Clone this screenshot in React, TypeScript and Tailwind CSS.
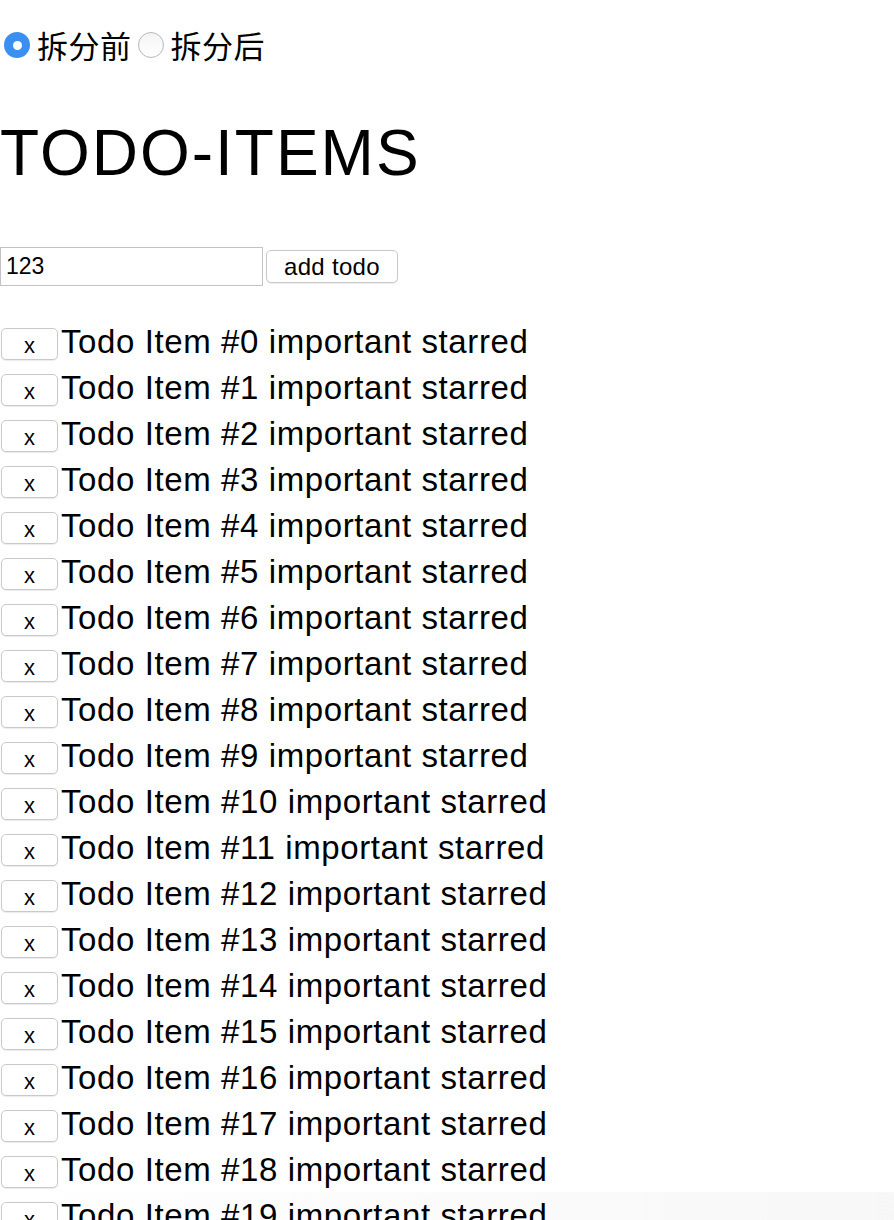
import React from "react";

const font = { fontFamily: '"Liberation Sans", Arial, "Noto Sans CJK SC", sans-serif' };

export default function App() {
  const items = Array.from({ length: 22 }, (_, i) => i);
  return (
    <div className="relative bg-white text-black h-[1220px] overflow-hidden" style={font}>
      <div className="pt-[31px] h-[59px] flex items-center">
        <span className="ml-[4px] w-[26px] h-[26px] rounded-full bg-[#3b8fef] flex items-center justify-center">
          <span className="w-[9px] h-[9px] rounded-full bg-white" />
        </span>
        <span className="ml-[7px] text-[31px] leading-[34px] tracking-[0.5px] font-['Noto_Sans_CJK_SC',sans-serif]">拆分前</span>
        <span className="ml-[6px] w-[26px] h-[26px] rounded-full border border-[#b8b8b8] bg-gradient-to-b from-[#f4f4f4] to-white" />
        <span className="ml-[7px] text-[31px] leading-[34px] tracking-[0.5px] font-['Noto_Sans_CJK_SC',sans-serif]">拆分后</span>
      </div>
      <h1 className="mt-[62px] h-[64px] text-[64px] leading-[64px] tracking-[2px]">TODO-ITEMS</h1>
      <div className="mt-[62px] flex items-start">
        <input
          readOnly
          value="123"
          className="w-[263px] h-[39px] border border-[#c2c2c2] pl-[5px] text-[23px] outline-none"
          style={font}
        />
        <button className="ml-[3px] mt-[3px] w-[132px] h-[33px] rounded-[5px] border border-[#c9c9c9] bg-white shadow-[0_1px_1px_rgba(0,0,0,0.08)] text-[24px] leading-[30px] pt-[1px] tracking-[0.3px]">
          add todo
        </button>
      </div>
      <div className="mt-[35px]">
        {items.map((i) => (
          <div key={i} className="h-[46px] flex items-start">
            <button className="ml-[1px] mt-[7px] w-[57px] h-[32px] rounded-[5px] border border-[#c9c9c9] bg-white shadow-[0_1px_1px_rgba(0,0,0,0.08)] text-[22px] leading-[26px] pt-[4px] flex justify-center">
              x
            </button>
            <span className="ml-[3px] text-[33px] leading-[42px] tracking-[0.6px] whitespace-nowrap">
              Todo Item #{i} important starred
            </span>
          </div>
        ))}
      </div>
      <div className="absolute left-0 right-0 bottom-0 h-[28px] bg-gradient-to-r from-transparent via-black/[0.015] to-black/[0.03]" />
    </div>
  );
}
